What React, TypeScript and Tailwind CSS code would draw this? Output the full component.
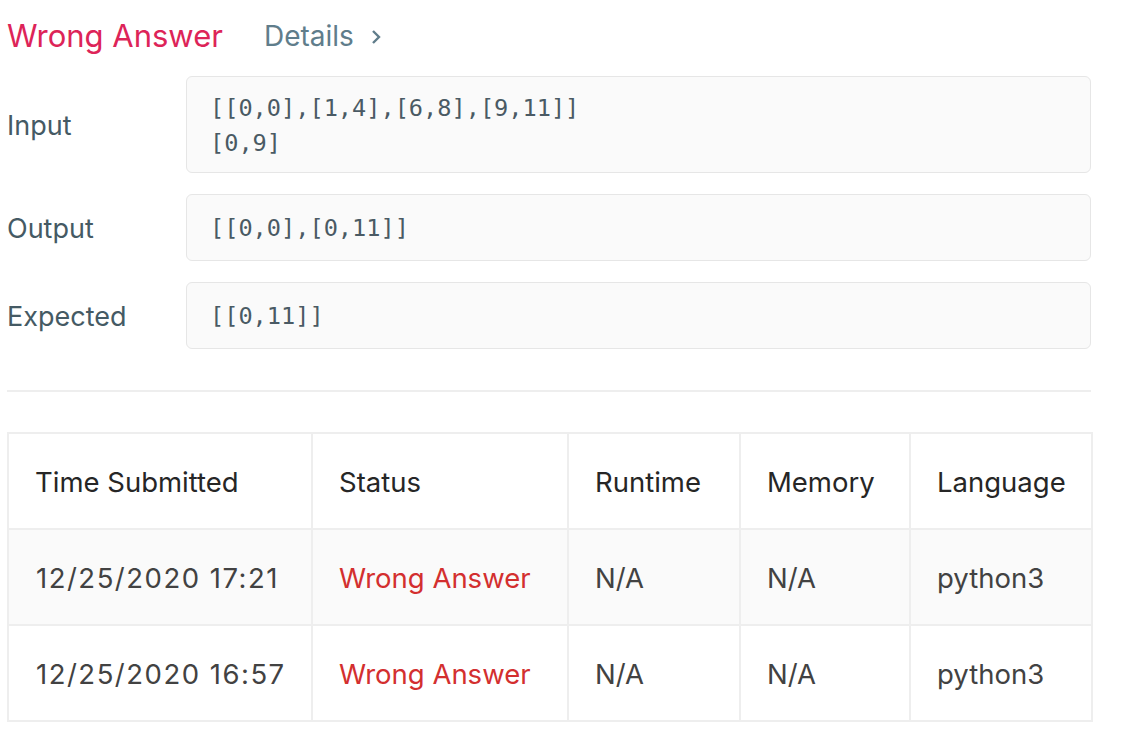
import React from 'react'

const rows = [
    { time: '12/25/2020 17:21', status: 'Wrong Answer', runtime: 'N/A', memory: 'N/A', lang: 'python3' },
    { time: '12/25/2020 16:57', status: 'Wrong Answer', runtime: 'N/A', memory: 'N/A', lang: 'python3' },
]

const sans = { fontFamily: 'Inter, "Liberation Sans", Arial, sans-serif' }

const CodeRow = ({ label, lines, h }: { label: string; lines: string[]; h: string }) => {
    return (
        <div className="flex items-center">
            <div className="w-[179px] text-[27px] leading-[36px] text-[#455a64] pt-[3px]">{label}</div>
            <div
                className={`flex-1 ${h} flex flex-col justify-center px-[23px] pt-[2px] rounded-[6px] border border-[#e6e6e6] bg-[#fafafa] text-[#4a5a64] text-[23.6px] leading-[35px] font-['DejaVu_Sans_Mono',monospace]`}
            >
                {lines.map((l) => (
                    <div key={l}>{l}</div>
                ))}
            </div>
        </div>
    )
}

const App = () => {
    return (
        <div className="w-[1122px] h-[732px] bg-white pl-[7px] pr-[31px] overflow-hidden" style={sans}>
            <div className="flex items-center pt-[18px] gap-[41px]">
                <span className="text-[31px] leading-[36px] text-[#dd2458]">Wrong Answer</span>
                <span className="flex items-center text-[28px] leading-[36px] text-[#607d8b]">
                    Details
                    <svg width="12" height="16" viewBox="0 0 12 16" className="ml-[16px] mt-[2px]">
                        <polyline points="3,2 9,8 3,14" fill="none" stroke="#607d8b" strokeWidth="2.4" />
                    </svg>
                </span>
            </div>

            <div className="mt-[22px] flex flex-col gap-[21px]">
                <CodeRow label="Input" lines={['[[0,0],[1,4],[6,8],[9,11]]', '[0,9]']} h="h-[97px]" />
                <CodeRow label="Output" lines={['[[0,0],[0,11]]']} h="h-[67px]" />
                <CodeRow label="Expected" lines={['[[0,11]]']} h="h-[67px]" />
            </div>

            <div className="mt-[41px] h-[2px] bg-[#eeeeee]" />

            <table className="mt-[40px] w-full table-fixed border-collapse border-2 border-[#eeeeee] text-[27.5px]">
                <colgroup>
                    <col className="w-[304px]" />
                    <col className="w-[256px]" />
                    <col className="w-[172px]" />
                    <col className="w-[170px]" />
                    <col className="w-[182px]" />
                </colgroup>
                <thead>
                    <tr className="h-[96px] text-[#262626]">
                        {['Time Submitted', 'Status', 'Runtime', 'Memory', 'Language'].map((h) => (
                            <th key={h} className="border-2 border-[#eeeeee] pl-[26px] pt-[3px] text-left font-normal whitespace-nowrap">
                                {h}
                            </th>
                        ))}
                    </tr>
                </thead>
                <tbody>
                    {rows.map((r, i) => (
                        <tr key={r.time} className={`h-[96px] text-[#424242] ${i === 0 ? 'bg-[#fafafa]' : 'bg-white'}`}>
                            <td className="border-2 border-[#eeeeee] pl-[27px] pt-[3px] whitespace-nowrap tracking-[1.5px]">{r.time}</td>
                            <td className="border-2 border-[#eeeeee] pl-[26px] pt-[3px] whitespace-nowrap text-[#d32f2f]">{r.status}</td>
                            <td className="border-2 border-[#eeeeee] pl-[26px] pt-[3px]">{r.runtime}</td>
                            <td className="border-2 border-[#eeeeee] pl-[26px] pt-[3px]">{r.memory}</td>
                            <td className="border-2 border-[#eeeeee] pl-[26px] pt-[3px]">{r.lang}</td>
                        </tr>
                    ))}
                </tbody>
            </table>
        </div>
    )
}

export default App
